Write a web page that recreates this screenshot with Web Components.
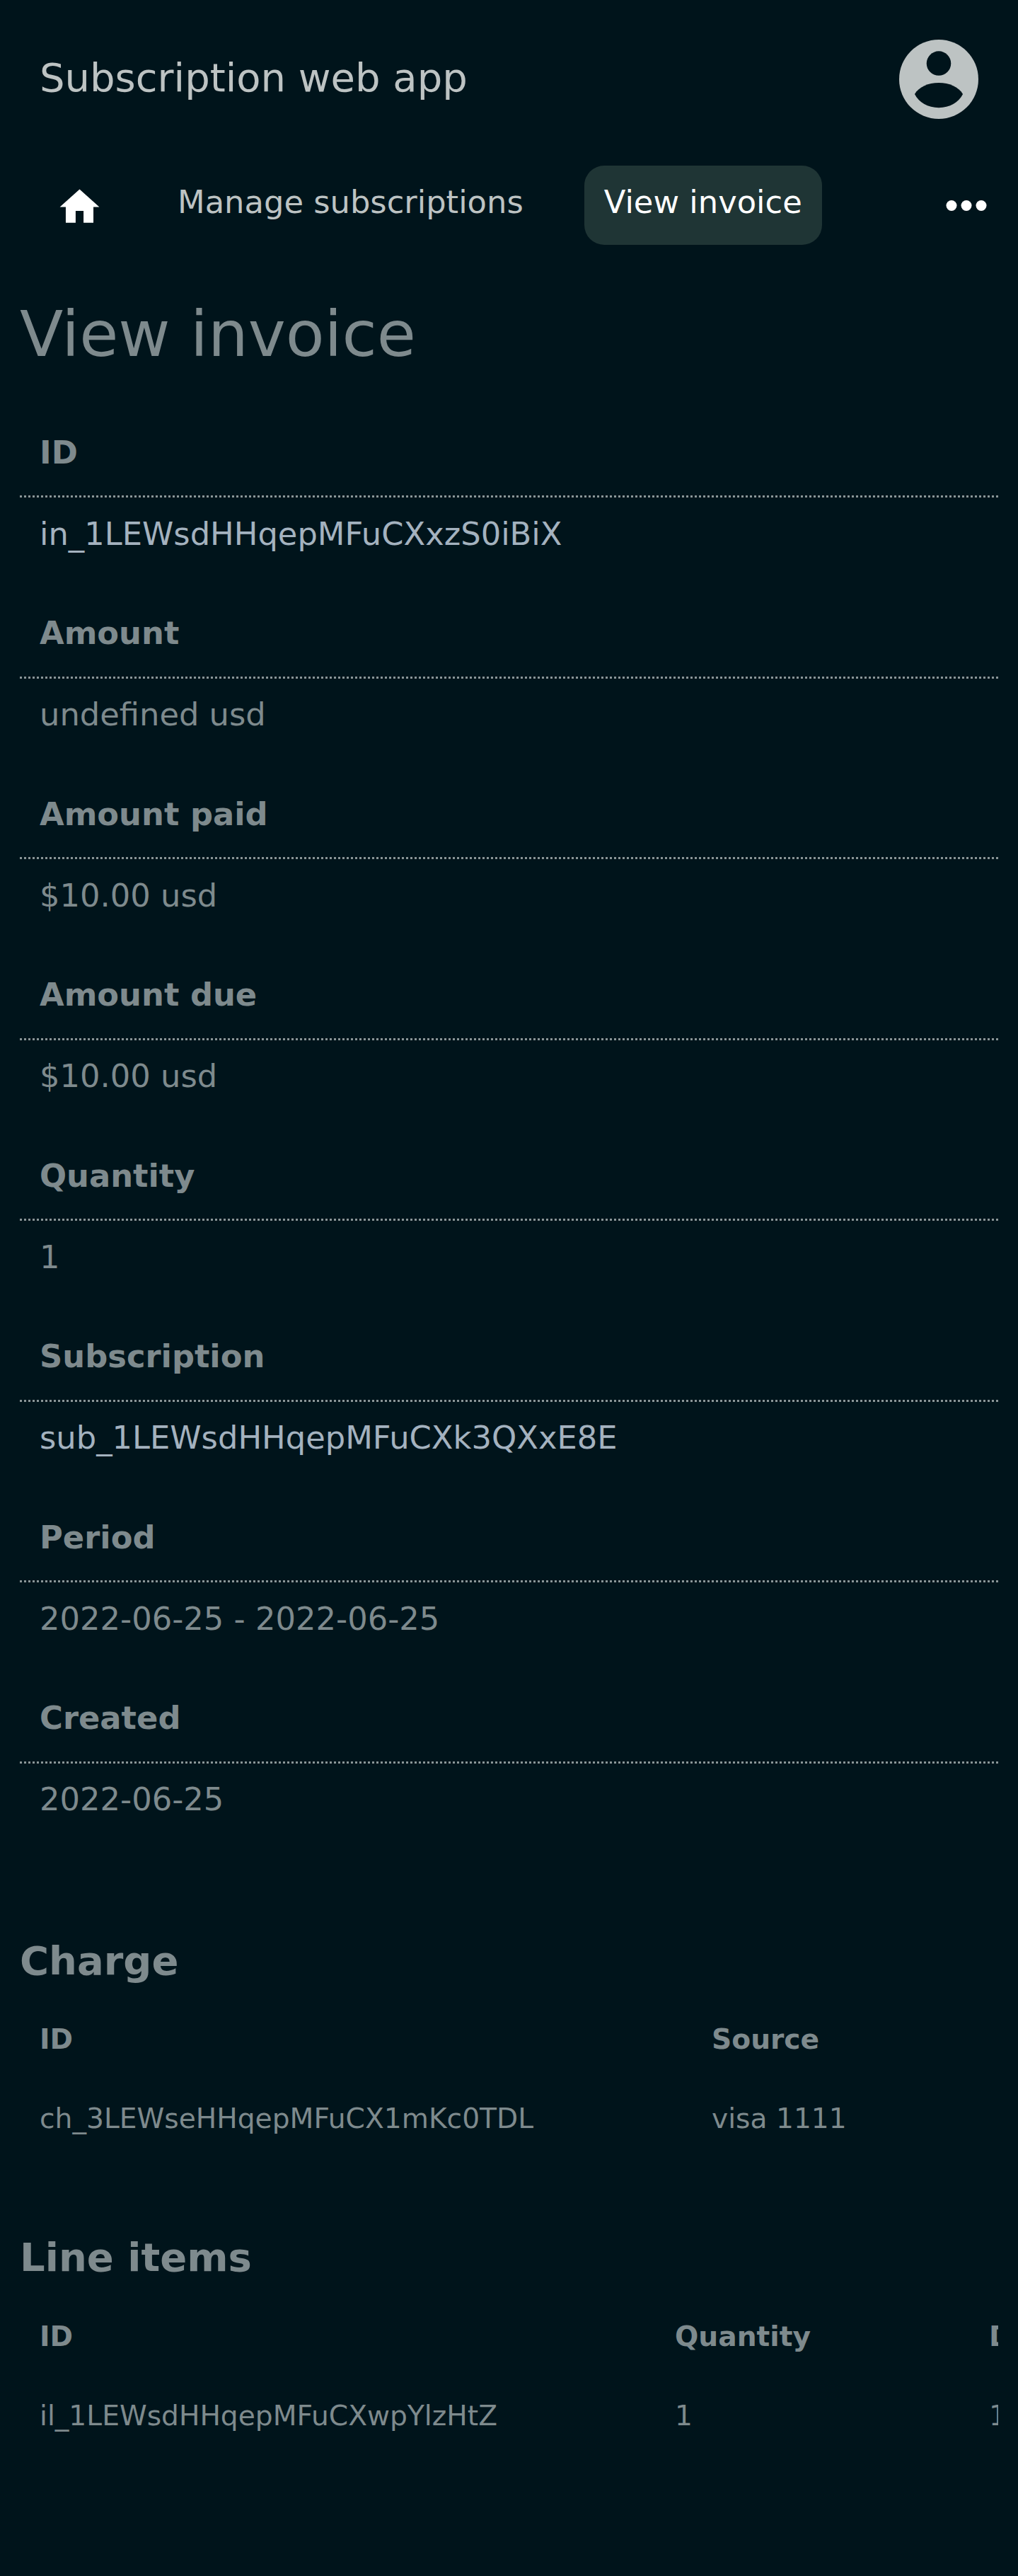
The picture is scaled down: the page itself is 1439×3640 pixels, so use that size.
<!DOCTYPE html>
<html lang="en">
<head>
<meta charset="utf-8">
<title>View invoice</title>
<style>
html, body { margin: 0; background: #00141b; }
body { font-family: "DejaVu Sans", sans-serif; color: #bdc3c3; }
</style>
</head>
<body>
<app-header>Subscription web app</app-header>
<app-nav>
  <nav-item icon="home"></nav-item>
  <nav-item style="margin-left:55px">Manage subscriptions</nav-item>
  <nav-item active style="margin-left:58px">View invoice</nav-item>
  <nav-item icon="more" style="margin-left:auto"></nav-item>
</app-nav>
<page-title>View invoice</page-title>
<info-row label="ID" tone="link">in_1LEWsdHHqepMFuCXxzS0iBiX</info-row>
<info-row label="Amount">undefined usd</info-row>
<info-row label="Amount paid">$10.00 usd</info-row>
<info-row label="Amount due">$10.00 usd</info-row>
<info-row label="Quantity">1</info-row>
<info-row label="Subscription" tone="link">sub_1LEWsdHHqepMFuCXk3QXxE8E</info-row>
<info-row label="Period">2022-06-25 - 2022-06-25</info-row>
<info-row label="Created">2022-06-25</info-row>
<section-title style="margin-top:108px">Charge</section-title>
<data-table cols="950px 400px" head="ID|Source" row="ch_3LEWseHHqepMFuCX1mKc0TDL|visa 1111"></data-table>
<section-title style="margin-top:138.400px">Line items</section-title>
<data-table cols="898px 444px 200px" head="ID|Quantity|Description" row="il_1LEWsdHHqepMFuCXwpYlzHtZ|1|1 x Subscription"></data-table>

<script>
const icons = {
  home: `<svg width="67" height="67" viewBox="0 0 24 24" fill="#fff" style="margin-top:4px"><path d="M10 20v-6h4v6h5v-8h3L12 3 2 12h3v8z"/></svg>`,
  more: `<svg width="58" height="15" viewBox="0 0 58 15" fill="#fff"><circle cx="8" cy="7.500" r="7.500"/><circle cx="29" cy="7.500" r="7.500"/><circle cx="50" cy="7.500" r="7.500"/></svg>`
};

//top bar with app name and account icon
class AppHeader extends HTMLElement {
  constructor() {
    super();
    this.attachShadow({ mode: "open" }).innerHTML = `
    <style>
      :host { display: flex; align-items: center; justify-content: space-between; height: 220px; padding: 0 56px; box-sizing: border-box; }
      .name { font-size: 56px; line-height: 1; color: #bdc3c3; }
      svg { display: block; margin-top: 4px; }
    </style>
    <div class="name"><slot></slot></div>
    <svg width="112" height="112" viewBox="0 0 24 24">
      <circle cx="12" cy="12" r="12" fill="#bdc3c3"/>
      <circle cx="12" cy="7.200" r="3.700" fill="#00141b"/>
      <path d="M4.700 16.500C6 14.300 8.800 13.070 12 13.070s6 1.230 7.300 3.430C18 19 15.300 20.600 12 20.600s-6-1.600-7.300-4.100z" fill="#00141b"/>
    </svg>`;
  }
}

//row of nav items
class AppNav extends HTMLElement {
  constructor() {
    super();
    this.attachShadow({ mode: "open" }).innerHTML = `
    <style>
      :host { display: flex; align-items: center; height: 112px; padding: 0 17.500px 0 56px; margin-top: 14px; }
    </style>
    <slot></slot>`;
  }
}

class NavItem extends HTMLElement {
  constructor() {
    super();
    const icon = icons[this.getAttribute("icon")] || "";
    const on = this.hasAttribute("active");
    this.attachShadow({ mode: "open" }).innerHTML = `
    <style>
      :host { display: flex; align-items: center; height: 112px; box-sizing: border-box; padding: 0 28px 9px; font-size: 44.800px; border-radius: 28px; color: ${on ? "#fff" : "#bdc3c3"}; background: ${on ? "#1f3535" : "transparent"}; }
      svg { display: block; }
      :host([icon]) { padding: 0; width: 112px; justify-content: center; }
    </style>
    ${icon}<slot></slot>`;
  }
}

class PageTitle extends HTMLElement {
  constructor() {
    super();
    this.attachShadow({ mode: "open" }).innerHTML = `
    <style>
      :host { display: block; font-size: 89.600px; line-height: 1; color: #7e8a8d; margin: 82px 28px 67px; }
    </style>
    <slot></slot>`;
  }
}

//label, dotted rule, value
class InfoRow extends HTMLElement {
  constructor() {
    super();
    const tone = this.getAttribute("tone") === "link" ? "#a4b2bf" : "#7e8a8d";
    this.attachShadow({ mode: "open" }).innerHTML = `
    <style>
      :host { display: block; margin: 0 28px; height: 255.500px; }
      .label { font-weight: 700; font-size: 44.800px; line-height: 54px; color: #7e8a8d; padding: 28px 28px 0; height: 87.500px; border-bottom: 3px dotted #8a9597; }
      .value { font-size: 44.800px; line-height: 54px; color: ${tone}; padding: 24.800px 28px 0; }
    </style>
    <div class="label">${this.getAttribute("label")}</div>
    <div class="value"><slot></slot></div>`;
  }
}

class SectionTitle extends HTMLElement {
  constructor() {
    super();
    this.attachShadow({ mode: "open" }).innerHTML = `
    <style>
      :host { display: block; font-weight: 700; font-size: 56px; line-height: 68px; color: #7e8a8d; margin: 0 28px; }
    </style>
    <slot></slot>`;
  }
}

//table cut at the right edge of the page content
class DataTable extends HTMLElement {
  constructor() {
    super();
    const cols = this.getAttribute("cols");
    const cells = (attr, cls) => this.getAttribute(attr).split("|").map(t => `<div class="${cls}">${t}</div>`).join("");
    this.attachShadow({ mode: "open" }).innerHTML = `
    <style>
      :host { display: block; margin: 0 28px; overflow: hidden; font-size: 39.200px; }
      .grid { display: grid; grid-template-columns: ${cols}; row-gap: 64px; width: max-content; padding: 53.400px 0 0 28px; }
      .th, .td { white-space: nowrap; line-height: 48px; color: #7e8a8d; }
      .th { font-weight: 700; }
    </style>
    <div class="grid">${cells("head", "th")}${cells("row", "td")}</div>`;
  }
}

customElements.define("app-header", AppHeader);
customElements.define("app-nav", AppNav);
customElements.define("nav-item", NavItem);
customElements.define("page-title", PageTitle);
customElements.define("info-row", InfoRow);
customElements.define("section-title", SectionTitle);
customElements.define("data-table", DataTable);
</script>
</body>
</html>
